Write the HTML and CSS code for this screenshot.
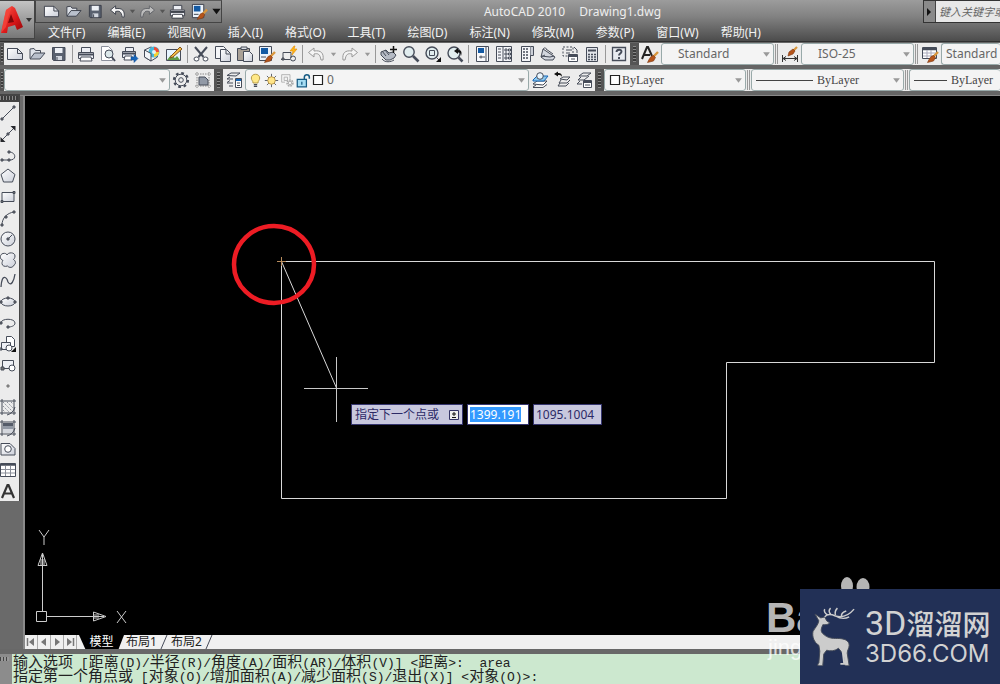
FILE: index.html
```html
<!DOCTYPE html>
<html lang="zh-CN">
<head>
<meta charset="utf-8">
<title>AutoCAD 2010 Drawing1.dwg</title>
<link rel="stylesheet" href="styles.css">
</head>
<body>
<svg class="sprite" aria-hidden="true">
  <defs>
    <linearGradient id="paper" x1="0" y1="0" x2="1" y2="1"><stop offset="0" stop-color="#fff"/><stop offset="1" stop-color="#ccd0da"/></linearGradient>
    <linearGradient id="red" x1="0" y1="0" x2="1" y2="1"><stop offset="0" stop-color="#ff5a4a"/><stop offset="0.6" stop-color="#d81517"/><stop offset="1" stop-color="#8c0608"/></linearGradient>
    <g id="brush"><path d="M17 7l-5 5" stroke="#d9963c" stroke-width="2.4"/><path d="M12.5 10.500l2 2-2 3.500-6 1.500 1.500-3 2-3z" fill="#b5541a" stroke="#7a3510" stroke-width=".6"/></g>
  </defs>
  <symbol id="new" viewBox="0 0 18 18"><path d="M1.500 3.500h10l5 5v6h-15z" fill="url(#paper)"/><path d="M11.500 3.500v5h5"/></symbol>
  <symbol id="open" viewBox="0 0 18 18"><path d="M2 13.500V4l4-.5 1.500 2h5v3" fill="#dfe3ea"/><path d="M2 14l4.500-6H17l-5 6z" fill="#b9c0cc"/></symbol>
  <symbol id="save" viewBox="0 0 18 18"><path d="M2.500 2.500h12.500v13H3.500l-1-1z" fill="#59616f"/><path d="M5 3h7.500v5H5z" fill="#edf0f5" stroke="none"/><path d="M6 11h6v4H6z" fill="#d3d8e0" stroke="none"/><path d="M7 12v3"/></symbol>
  <symbol id="print" viewBox="0 0 18 18"><path d="M4.500 7V2.500h9V7M1.500 7.500h15v6h-15z" fill="#eceef3"/><path d="M2 9.500h14" stroke-width="2"/><path d="M4 12h10l1 4H3z" fill="#fff"/></symbol>
  <symbol id="preview" viewBox="0 0 18 18"><path d="M2.500 1.500h7l4 4v10h-11z" fill="#fff" stroke="#8b909b"/><circle cx="10" cy="9" r="4" fill="#dce8ea"/><path d="M12.800 12l3.200 4" stroke-width="2"/></symbol>
  <symbol id="publish" viewBox="0 0 18 18"><path d="M4.500 6V2.500h8V6M1.500 6.500h13v6h-13z" fill="#eceef3"/><path d="M2 8.500h12" stroke-width="2"/><path d="M4 11h7v4H3z" fill="#fff"/><path d="M10 12h3v-2.500l4 4-4 4V15h-3z" fill="#1765b8" stroke="#0c4a91" stroke-width=".5"/></symbol>
  <symbol id="dwf" viewBox="0 0 18 18"><path d="M8 2l6.500 3v7L8 16l-6.500-4V5z" fill="#f2f5f8"/><circle cx="11" cy="7" r="5.500" fill="#48b7d8" stroke="none"/><path d="M11 7V2a5 5 0 0 1 5 5z" fill="#f04b34" stroke="none"/><path d="M11 7h5a5 5 0 0 1-5 5z" fill="#f5cf31" stroke="none"/><circle cx="11" cy="7" r="2" fill="#dff3f8" stroke="none"/><path d="M1.500 5L8 8.500V16l-6.500-4z" fill="#f2f5f8"/></symbol>
  <symbol id="markup" viewBox="0 0 18 18"><path d="M1.500 4.500h14v11h-14z" fill="#e7f5ff"/><path d="M2 15l4-5 4 3 2-2 3 4z" fill="#5f9b45" stroke="none"/><path d="M6 11l9-9 2 2-9 8-3 1z" fill="#f3bd49" stroke="#85551b"/></symbol>
  <symbol id="cut" viewBox="0 0 18 18"><path d="M3 2l8.500 10M15 2L6.500 12" stroke-width="2"/><ellipse cx="4.500" cy="14" rx="2.500" ry="2" fill="#fff"/><ellipse cx="13.500" cy="14" rx="2.500" ry="2" fill="#fff"/></symbol>
  <symbol id="copy" viewBox="0 0 18 18"><path d="M1.500 1.500h8l2 2v10h-10z" fill="#f5f6f8"/><path d="M6.500 4.500h6l4 4v8h-10z" fill="url(#paper)"/><path d="M12 5v4h4"/></symbol>
  <symbol id="paste" viewBox="0 0 18 18"><path d="M1.500 3.500h12v12h-12z" fill="#aaa196"/><path d="M5 4.500V2h6v2.500z" fill="#d9dce1"/><path d="M7.500 6.500h6l3 3v7h-9z" fill="url(#paper)"/></symbol>
  <symbol id="match" viewBox="0 0 18 18"><path d="M1.500 1.500h12v14h-12z" fill="#edf3fa"/><path d="M3 3h7v6H3z" fill="#145aa3" stroke="none"/><path d="M3 12h5"/><use href="#brush"/></symbol>
  <symbol id="block" viewBox="0 0 18 18"><path d="M3 13V7.500h8V13M1 14.500h9"/><circle cx="13" cy="13.500" r="2.500"/><path d="M2 13h2v2H2z" fill="#777"/><path d="M14 1l-4 5h3l-1 4 5-6h-3l1-3z" fill="#ffb619" stroke="#e38a00" stroke-width=".6"/></symbol>
  <symbol id="undo" viewBox="0 0 18 18"><path d="M7 3L1.500 7.500 7 12V9c4-1 6 0 7 6h2c1-7-2-10-9-9z" fill="#f5f5f5"/></symbol>
  <symbol id="redo" viewBox="0 0 18 18"><path d="M11 3l5.500 4.500L11 12V9c-4-1-6 0-7 6H2C1 8 4 5 11 6z" fill="#f5f5f5"/></symbol>
  <symbol id="caret" viewBox="0 0 8 8"><path d="M1 2h6L4 6z" fill="currentColor" stroke="none"/></symbol>
  <symbol id="pan" viewBox="0 0 18 18"><path d="M1 7l5-2 3 3 4-1 3 3-2 3-4 2H6l-5-5z" fill="#b5bac4"/><path d="M2 6l4 5M5 5l4 5M2 14c3 4 9 3 12 1"/><path d="M13.500 1v7M10 4.500h7" stroke="#111" stroke-width="1.500"/></symbol>
  <symbol id="zoom" viewBox="0 0 18 18"><circle cx="7" cy="7" r="5.200" fill="#e1edef" stroke-width="1.400"/><path d="M11 11l5.500 5.500" stroke-width="2.600"/></symbol>
  <symbol id="zoomw" viewBox="0 0 18 18"><circle cx="8" cy="8" r="6" fill="#e1edef" stroke-width="1.400"/><path d="M5.500 5.500h5v5h-5zM12.500 12.500l2.500 2.500"/><path d="M17 12v5h-5z" fill="#111" stroke="none"/></symbol>
  <symbol id="zoomp" viewBox="0 0 18 18"><circle cx="8" cy="8" r="6" fill="#e1edef" stroke-width="1.400"/><path d="M12.500 12.500l4 4" stroke-width="2.500"/><path d="M8 6l4-3v2c4 0 4 3 3 6-.5-3-1-3.500-3-3.500V9z" fill="#111" stroke="none"/></symbol>
  <symbol id="props" viewBox="0 0 18 18"><path d="M3.500 1.500h12v15h-12z" fill="#f8f9fc"/><path d="M5 3h6v5H5z" fill="#145aa3" stroke="none"/><path d="M13 2v14M6 12h6M8 10.500v3"/></symbol>
  <symbol id="center" viewBox="0 0 18 18"><path d="M1.500 1.500h15v15h-15z" fill="#f4f5f8"/><path d="M8 2v14M3 4h3M3 7h3M3 10h3M3 13h3M10 4h2v2h-2zM13.500 4h2v2h-2zM10 8h2v2h-2zM13.500 8h2v2h-2zM10 12h2v2h-2zM13.500 12h2v2h-2z"/></symbol>
  <symbol id="palette" viewBox="0 0 18 18"><path d="M4.500 1.500h9v15h-9z" fill="#f4f5f8"/><path d="M13.500 1.500h3v9h-3" fill="#ccd0d8"/><path d="M6 4h5M6 7h5M6 10h5M6 13h5" stroke-width="1.500" stroke-dasharray="2 1"/></symbol>
  <symbol id="sheet" viewBox="0 0 18 18"><path d="M4 4l12 8-2 3H6l-4-3z" fill="#d2d6de"/><path d="M4 4c2-2 3-1 3 0l7 5M2 11l9 1 4-1M2 12l4-2"/></symbol>
  <symbol id="dashed" viewBox="0 0 18 18"><path d="M2 2h10v9H2z" stroke-dasharray="2 1.500"/><path d="M5 5h6M5 8h4M13 2l3 3v3"/><path d="M7.500 9.500h9v7h-9z" fill="#fff"/><path d="M8 11h8" stroke-width="2"/><path d="M10 14h4"/></symbol>
  <symbol id="calc" viewBox="0 0 18 18"><path d="M3.500 2.500h11v14h-11z" fill="#e3e6eb"/><path d="M5 5.500h8" stroke-width="2"/><path d="M5 9.500h8M5 12h8M5 14.500h8" stroke-width="1.500" stroke-dasharray="2 1"/></symbol>
  <symbol id="help" viewBox="0 0 18 18"><path d="M2.500 2.500h13v13h-13z" fill="#e8ebf0" stroke-width="1.300"/><path d="M6.500 7c0-3 5-3 5-.5 0 2-2.500 2-2.500 4M9 12v2" stroke-width="1.900"/></symbol>
  <symbol id="textstyle" viewBox="0 0 18 18"><path d="M1 14L6 2h1l4 9M3 10h6" stroke="#222" stroke-width="2"/><use href="#brush"/></symbol>
  <symbol id="dimstyle" viewBox="0 0 18 18"><path d="M1.500 10v7M16.500 10v7M2 13.500h14M5 11.500l-3 2 3 2M13 11.500l3 2-3 2" stroke="#333"/><path d="M16 2l-4 4" stroke="#d9963c" stroke-width="2.200"/><path d="M12 4l2 2-2 3-5 2 1-4z" fill="#b5541a" stroke="#7a3510" stroke-width=".6"/></symbol>
  <symbol id="tablestyle" viewBox="0 0 18 18"><path d="M1.500 2.500h14v11h-14z" fill="#fff"/><path d="M2 4h13" stroke-width="2.500"/><path d="M2 8h13M2 11h13M6 5v8M10 5v8" stroke="#aab"/><use href="#brush"/></symbol>
  <symbol id="gear" viewBox="0 0 18 18"><circle cx="9" cy="9" r="7" stroke-width="2.200" stroke-dasharray="2.750 2.750"/><circle cx="9" cy="9" r="5.800" fill="#eee"/><circle cx="9" cy="9" r="2.300"/></symbol>
  <symbol id="workspace" viewBox="0 0 18 18"><path d="M3 1v16M15 1v16M1 3h16M1 15h16" stroke="#888" stroke-dasharray="1.500 1"/><path d="M5 6h6l3 3v5H5z" fill="#9199a6"/></symbol>
  <symbol id="layerprop" viewBox="0 0 18 18"><path d="M2 4.500L6 2h9l-4 3zM2 8l3-2M2 8h6M2 11.500l3-2M2 12h6M4 15h4"/><path d="M10.500 7.500h6v9h-6z" fill="#fff"/><path d="M11 9h5" stroke="#1766b6" stroke-width="2"/><path d="M12 12h3M12 14.500h3"/></symbol>
  <symbol id="bulb" viewBox="0 0 18 18"><path d="M6 12c0-3-2-3-2-6 0-6 10-6 10 0 0 3-2 3-2 6z" fill="#ffe887" stroke="#a88c38"/><path d="M7 14h4M7 16h4" stroke-width="1.500"/></symbol>
  <symbol id="sun" viewBox="0 0 18 18"><path d="M9 1v16M1 9h16M3.500 3.500l11 11M14.500 3.500l-11 11"/><circle cx="9" cy="9" r="4.500" fill="#ffe58a" stroke="#b48b38"/></symbol>
  <symbol id="vpfreeze" viewBox="0 0 18 18"><g stroke="#aaa"><path d="M2 2h10v5M2 2v9h4M5 5h4v4H5z"/><circle cx="12" cy="12" r="3.500" stroke-width="2" stroke-dasharray="2 1"/><circle cx="12" cy="12" r="2"/></g></symbol>
  <symbol id="lock" viewBox="0 0 18 18"><path d="M10 8V5c0-4 6-4 6 0v2" stroke="#175b83" stroke-width="1.800"/><path d="M1.500 7.500h11v9h-11z" fill="#a6ddf3" stroke="#175b83" stroke-width="1.500"/><path d="M7 10.500v3.500" stroke="#175b83" stroke-width="1.500"/></symbol>
  <symbol id="swatch" viewBox="0 0 12 12"><path d="M1.500 1.500h9v9h-9z" fill="#fff" stroke="#222" stroke-width="1.200"/></symbol>
  <symbol id="layercur" viewBox="0 0 18 18"><path d="M2 13l4-3h10l-4 4zM2 16l3-2M2 16.500h10l4-3" fill="#fff"/><path d="M2 9l4-4h11l-4 5H2z" fill="#8ec8ed" stroke="#1766b6"/><circle cx="9" cy="5" r="3.300" fill="#e8f6ff"/></symbol>
  <symbol id="layerprev" viewBox="0 0 18 18"><path d="M7 8l3-2h7l-3 3zM6 12h8l3-3M5 15h8l3-3M8 9l-2 3M7 12l-2 3"/><path d="M1 3l4-2.500V2c3 0 4 1 4 4-1-2-2-2-4-2v1.500z" fill="#111" stroke="none"/></symbol>
  <symbol id="layerstate" viewBox="0 0 18 18"><path d="M4 5l4-3h8l-4 3zM3 9l3-3M3 9h6l5-4M2 13l3-3M2 13h5"/><path d="M8.500 9.500h8v7h-8z" fill="#fff"/><path d="M9 11h7" stroke-width="2"/><path d="M10 14h5"/></symbol>

  <symbol id="line" viewBox="0 0 18 18"><path d="M3 15L15 3"/><path d="M2 14h2v2H2zM14 2h2v2h-2z" fill="#777"/></symbol>
  <symbol id="xline" viewBox="0 0 18 18"><path d="M3 15L15 3"/><path d="M1.500 17v-5l5 5zM16.500 1v5l-5-5z" fill="#26282d" stroke="none"/><path d="M8 8h2v2H8z" fill="#777"/></symbol>
  <symbol id="pline" viewBox="0 0 18 18"><path d="M3 14h8c7 0 6-8-1-8"/><path d="M2 13h2v2H2zM9 13h2v2H9zM9 5h2v2H9z" fill="#777"/></symbol>
  <symbol id="polygon" viewBox="0 0 18 18"><path d="M9 2l7 5.500L13.500 15h-9L2 7.500z" fill="url(#paper)"/></symbol>
  <symbol id="rect" viewBox="0 0 18 18"><path d="M3 4.500h12v9H3z" fill="url(#paper)"/><path d="M2 12.500h2v2H2zM14 3.500h2v2h-2z" fill="#777"/></symbol>
  <symbol id="arc" viewBox="0 0 18 18"><path d="M3 16C3 9 8 4 15 3"/><path d="M2 15h2v2H2zM6 7h2v2H6zM14 2h2v2h-2z" fill="#777"/></symbol>
  <symbol id="circle" viewBox="0 0 18 18"><circle cx="9" cy="9" r="7" fill="url(#paper)"/><path d="M9 9l4-4"/><path d="M8 8h2v2H8z" fill="#777"/></symbol>
  <symbol id="cloud" viewBox="0 0 18 18"><path d="M8 4c1-3 8-3 8 1 0 2-1 3-1.500 3.500C17 10 17 13 15 14c-1 3-5 3-6.500 1C6 16 3 15 3 12.500 3 11 3.500 10 4 9.500 0 8 1 3 4 2.500c2-.5 3.500 0 4 1.500z" fill="url(#paper)"/></symbol>
  <symbol id="spline" viewBox="0 0 18 18"><path d="M2 15C3 0 8 6 9 10c3 5 6-1 7-8" stroke-width="1.300"/></symbol>
  <symbol id="ellipse" viewBox="0 0 18 18"><ellipse cx="9" cy="9" rx="7" ry="4" fill="url(#paper)"/><path d="M8 4h2v2H8zM1 8h2v2H1zM15 8h2v2h-2z" fill="#777"/></symbol>
  <symbol id="earc" viewBox="0 0 18 18"><path d="M2 9c0-5 14-5 14 0 0 3-4 4-7 4"/><path d="M1 8h2v2H1zM8 12h2v2H8z" fill="#777"/></symbol>
  <symbol id="insert" viewBox="0 0 18 18"><path d="M7.500 1.500h5l3 3v7h-8z" fill="#fff"/><path d="M2.500 7.500h9v7h-9z" fill="#eef0f5"/><circle cx="10" cy="13" r="3" fill="#fff"/><path d="M1 13h2v2H1z"/><path d="M17 12v5h-5z" fill="#111" stroke="none"/></symbol>
  <symbol id="mkblock" viewBox="0 0 18 18"><path d="M3.500 4.500h11v8h-11z" fill="#eef0f5"/><path d="M2 11h3v3H2z" fill="#777"/><circle cx="13" cy="12" r="3" fill="#fff"/></symbol>
  <symbol id="point" viewBox="0 0 18 18"><path d="M8 8h2v2H8z" fill="#999" stroke="#777"/></symbol>
  <symbol id="hatch" viewBox="0 0 18 18"><path d="M3 1v16M15 1v16M1 3h16M1 15h16"/><path d="M4 4l10 10M4 8l6 6M8 4l6 6M4 12l2 2M12 4l2 2" stroke="#8a8e98" stroke-dasharray="1.500 1"/><path d="M8 17c4-1 7-4 8-8"/></symbol>
  <symbol id="gradient" viewBox="0 0 18 18"><path d="M4 4h10v3H4z" fill="#555c69" stroke="none"/><path d="M4 7h10v3H4z" fill="#9299a5" stroke="none"/><path d="M4 10h10v4H4z" fill="#d4d7dd" stroke="none"/><path d="M3 1v16M15 1v16M1 3h16M1 15h16M8 17c4-1 7-4 8-8"/></symbol>
  <symbol id="region" viewBox="0 0 18 18"><path d="M2 3.500h9l5 5V15H2z" fill="url(#paper)"/><circle cx="9" cy="9" r="3.300" fill="#fff"/></symbol>
  <symbol id="table" viewBox="0 0 18 18"><path d="M1.500 2.500h15v13h-15z" fill="#fff"/><path d="M2 3.500h14" stroke-width="2.500"/><path d="M2 8.500h14M2 12h14M6.500 5v10M11.500 5v10" stroke="#8a8e98"/></symbol>
  <symbol id="mtext" viewBox="0 0 18 18"><path d="M3 16L8.500 3h1L15 16M5.500 11.500h7" stroke="#333" stroke-width="2.200"/></symbol>
</svg>

<header class="titlebar">
  <button class="appbtn" aria-label="应用程序菜单">
    <svg class="applogo" viewBox="0 0 22 30"><path d="M0 28L5 5l6-4 3 2 8 19-6 3-2-5-7 2-1 6z" fill="url(#red)"/><path d="M10 9l-3 9 6-1z" fill="#7d0709"/><path d="M5 5l6-4-4 12-2 9-5 6z" fill="#f8473d" opacity=".7"/></svg>
    <svg class="caret"><use href="#caret"/></svg>
  </button>
  <div class="headmain">
    <div class="toprow">
      <div class="quick">
        <button aria-label="新建"><svg><use href="#new"/></svg></button>
        <button aria-label="打开"><svg><use href="#open"/></svg></button>
        <button aria-label="保存"><svg><use href="#save"/></svg></button>
        <button aria-label="放弃"><svg><use href="#undo"/></svg></button>
        <button aria-label="放弃列表" class="narrow"><svg><use href="#caret"/></svg></button>
        <button aria-label="重做" class="faded"><svg><use href="#redo"/></svg></button>
        <button aria-label="重做列表" class="narrow"><svg><use href="#caret"/></svg></button>
        <button aria-label="打印"><svg><use href="#print"/></svg></button>
        <button aria-label="特性匹配"><svg><use href="#match"/></svg></button>
        <button aria-label="自定义" class="narrow more"><svg><use href="#caret"/></svg></button>
      </div>
      <h1 class="title"><span>AutoCAD 2010</span><span>Drawing1.dwg</span></h1>
      <div class="search">
        <button aria-label="展开"><svg viewBox="0 0 6 8"><path d="M1 0l4 4-4 4z" fill="#111" stroke="none"/></svg></button>
        <input type="text" aria-label="搜索" placeholder="键入关键字或短语">
      </div>
    </div>
    <nav class="menu">
      <button>文件(F)</button><button>编辑(E)</button><button>视图(V)</button><button>插入(I)</button><button>格式(O)</button><button>工具(T)</button><button>绘图(D)</button><button>标注(N)</button><button>修改(M)</button><button>参数(P)</button><button>窗口(W)</button><button>帮助(H)</button>
    </nav>
  </div>
</header>

<div class="bars">
  <div class="barrow">
    <i class="grip edge"></i>
    <div class="bar">
      <button aria-label="新建"><svg><use href="#new"/></svg></button>
      <button aria-label="打开"><svg><use href="#open"/></svg></button>
      <button aria-label="保存"><svg><use href="#save"/></svg></button>
      <i class="sep"></i>
      <button aria-label="打印"><svg><use href="#print"/></svg></button>
      <button aria-label="打印预览"><svg><use href="#preview"/></svg></button>
      <button aria-label="发布"><svg><use href="#publish"/></svg></button>
      <button aria-label="三维DWF"><svg><use href="#dwf"/></svg></button>
      <button aria-label="标记"><svg><use href="#markup"/></svg></button>
      <i class="sep"></i>
      <button aria-label="剪切"><svg><use href="#cut"/></svg></button>
      <button aria-label="复制"><svg><use href="#copy"/></svg></button>
      <button aria-label="粘贴"><svg><use href="#paste"/></svg></button>
      <button aria-label="特性匹配"><svg><use href="#match"/></svg></button>
      <button aria-label="块编辑器"><svg><use href="#block"/></svg></button>
      <i class="sep"></i>
      <button aria-label="放弃" class="faded"><svg><use href="#undo"/></svg></button>
      <button aria-label="放弃列表" class="narrow"><svg><use href="#caret"/></svg></button>
      <button aria-label="重做" class="faded"><svg><use href="#redo"/></svg></button>
      <button aria-label="重做列表" class="narrow"><svg><use href="#caret"/></svg></button>
      <i class="sep"></i>
      <button aria-label="平移"><svg><use href="#pan"/></svg></button>
      <button aria-label="缩放"><svg><use href="#zoom"/></svg></button>
      <button aria-label="窗口缩放"><svg><use href="#zoomw"/></svg></button>
      <button aria-label="上一缩放"><svg><use href="#zoomp"/></svg></button>
      <i class="sep"></i>
      <button aria-label="特性"><svg><use href="#props"/></svg></button>
      <button aria-label="设计中心"><svg><use href="#center"/></svg></button>
      <button aria-label="工具选项板"><svg><use href="#palette"/></svg></button>
      <button aria-label="图纸集"><svg><use href="#sheet"/></svg></button>
      <button aria-label="标记集"><svg><use href="#dashed"/></svg></button>
      <button aria-label="计算器"><svg><use href="#calc"/></svg></button>
      <i class="sep"></i>
      <button aria-label="帮助"><svg><use href="#help"/></svg></button>
    </div>
    <i class="grip"></i>
    <div class="bar rest">
      <button aria-label="文字样式"><svg><use href="#textstyle"/></svg></button>
      <div class="combo style"><select aria-label="文字样式列表"><option>Standard</option></select><svg class="arrow"><use href="#caret"/></svg></div>
      <i class="dbl"></i>
      <button aria-label="标注样式"><svg><use href="#dimstyle"/></svg></button>
      <div class="combo style"><select aria-label="标注样式列表"><option>ISO-25</option></select><svg class="arrow"><use href="#caret"/></svg></div>
      <i class="dbl"></i>
      <button aria-label="表格样式"><svg><use href="#tablestyle"/></svg></button>
      <div class="combo tail"><select aria-label="表格样式列表"><option>Standard</option></select></div>
    </div>
  </div>
  <div class="barrow">
    <i class="grip edge"></i>
    <div class="bar">
      <div class="combo ws"><select aria-label="工作空间"><option></option></select><svg class="arrow"><use href="#caret"/></svg></div>
      <button aria-label="工作空间设置"><svg><use href="#gear"/></svg></button>
      <button aria-label="我的工作空间"><svg><use href="#workspace"/></svg></button>
    </div>
    <i class="grip"></i>
    <div class="bar">
      <button aria-label="图层特性"><svg><use href="#layerprop"/></svg></button>
      <div class="combo layer">
        <svg class="mini"><use href="#bulb"/></svg><svg class="mini"><use href="#sun"/></svg><svg class="mini"><use href="#vpfreeze"/></svg><svg class="mini"><use href="#lock"/></svg><svg class="sw"><use href="#swatch"/></svg>
        <select aria-label="图层"><option>0</option></select><svg class="arrow"><use href="#caret"/></svg>
      </div>
      <button aria-label="置为当前图层"><svg><use href="#layercur"/></svg></button>
      <button aria-label="上一图层"><svg><use href="#layerprev"/></svg></button>
      <button aria-label="图层状态"><svg><use href="#layerstate"/></svg></button>
    </div>
    <i class="grip"></i>
    <div class="bar rest">
      <div class="combo color"><svg class="sw"><use href="#swatch"/></svg><select aria-label="颜色"><option>ByLayer</option></select><svg class="arrow"><use href="#caret"/></svg></div>
      <i class="dbl"></i>
      <div class="combo ltype"><i class="rule"></i><select aria-label="线型"><option>ByLayer</option></select><svg class="arrow"><use href="#caret"/></svg></div>
      <i class="dbl"></i>
      <div class="combo tail weight"><i class="rule"></i><select aria-label="线宽"><option>ByLayer</option></select></div>
    </div>
  </div>
</div>

<main class="work">
  <aside class="draw">
    <i class="drawgrip"></i>
    <div class="tools">
      <button aria-label="直线"><svg><use href="#line"/></svg></button>
      <button aria-label="构造线"><svg><use href="#xline"/></svg></button>
      <button aria-label="多段线"><svg><use href="#pline"/></svg></button>
      <button aria-label="正多边形"><svg><use href="#polygon"/></svg></button>
      <button aria-label="矩形"><svg><use href="#rect"/></svg></button>
      <button aria-label="圆弧"><svg><use href="#arc"/></svg></button>
      <button aria-label="圆"><svg><use href="#circle"/></svg></button>
      <button aria-label="修订云线"><svg><use href="#cloud"/></svg></button>
      <button aria-label="样条曲线"><svg><use href="#spline"/></svg></button>
      <button aria-label="椭圆"><svg><use href="#ellipse"/></svg></button>
      <button aria-label="椭圆弧"><svg><use href="#earc"/></svg></button>
      <button aria-label="插入块"><svg><use href="#insert"/></svg></button>
      <button aria-label="创建块"><svg><use href="#mkblock"/></svg></button>
      <button aria-label="点"><svg><use href="#point"/></svg></button>
      <button aria-label="图案填充"><svg><use href="#hatch"/></svg></button>
      <button aria-label="渐变色"><svg><use href="#gradient"/></svg></button>
      <button aria-label="面域"><svg><use href="#region"/></svg></button>
      <button aria-label="表格"><svg><use href="#table"/></svg></button>
      <button aria-label="多行文字"><svg><use href="#mtext"/></svg></button>
    </div>
  </aside>
  <section class="view">
    <div class="canvas">
      <svg class="geometry" width="975" height="538" viewBox="0 0 975 538">
        <path d="M256.500 165.500h653v101h-208v136h-445z" stroke="#d8d8d8"/>
        <path d="M256.500 165.500L311.500 292" stroke="#d8d8d8"/>
        <path d="M311.500 261v65M279 292.500h64" stroke="#c8c8c8"/>
        <path d="M256.500 161v9M252 165.500h9" stroke="#b98d5e"/>
        <ellipse cx="249" cy="168.500" rx="40" ry="38.500" stroke="#ed1c24" stroke-width="4.500"/>
      </svg>
      <div class="dynamic">
        <label class="prompt" for="dx"><span>指定下一个点或</span><svg viewBox="0 0 10 10"><path d="M.5.5h9v9h-9z" fill="#eee" stroke="#336"/><path d="M5 2v4M3 4h4M3 7.500h4" stroke="#111"/></svg></label>
        <input id="dx" class="sel" type="text" value="1399.191">
        <input id="dy" class="coord" type="text" value="1095.1004" aria-label="第二坐标">
      </div>
      <svg class="ucs" width="96" height="96" viewBox="0 0 96 96">
        <path d="M4.500 79.500h10v10h-10zM10.500 79V24M15 84.500h47"/>
        <path d="M10.500 21L6 33.500h9zM10.500 22v11M9 27v6M12 27v6M74 84.500L61.500 80v9zM72 84.500H62M67 83h-5M67 86h-5"/>
        <path d="M7 -2l5 7 5-7M12 5v8M85 79l9 12M94 79l-9 12"/>
      </svg>
    </div>
    <div class="tabs">
      <button class="nav" aria-label="第一个"><svg viewBox="0 0 12 12"><path d="M2.500 2v8" stroke="#777" stroke-width="1.500"/><path d="M9 2v8L4 6z"/></svg></button>
      <button class="nav" aria-label="上一个"><svg viewBox="0 0 12 12"><path d="M8 2v8L3 6z"/></svg></button>
      <button class="nav" aria-label="下一个"><svg viewBox="0 0 12 12"><path d="M4 2v8l5-4z"/></svg></button>
      <button class="nav" aria-label="最后一个"><svg viewBox="0 0 12 12"><path d="M9.500 2v8" stroke="#777" stroke-width="1.500"/><path d="M3 2v8l5-4z"/></svg></button>
      <button class="tab active">模型</button>
      <button class="tab">布局1</button>
      <svg class="slash" viewBox="0 0 8 14"><path d="M7 0L1 14"/></svg>
      <button class="tab">布局2</button>
      <svg class="slash" viewBox="0 0 8 14"><path d="M7 0L1 14"/></svg>
    </div>
  </section>
</main>

<footer class="command">
  <i class="cmdgrip"></i>
  <div class="lines">
    <div class="cmdline"><span>输入选项<b> [</b>距离<b>(D)/</b>半径<b>(R)/</b>角度<b>(A)/</b>面积<b>(AR)/</b>体积<b>(V)] &lt;</b>距离<b>&gt;:  area</b></span></div>
    <div class="cmdline"><label for="cmd">指定第一个角点或<b> [</b>对象<b>(O)/</b>增加面积<b>(A)/</b>减少面积<b>(S)/</b>退出<b>(X)] &lt;</b>对象<b>(O)&gt;:</b></label><input id="cmd" type="text"></div>
  </div>
</footer>

<div class="baidu" aria-hidden="true">
  <svg viewBox="0 0 32 16"><ellipse cx="8" cy="9" rx="6" ry="9"/><ellipse cx="24" cy="10" rx="6.500" ry="9"/></svg>
  <strong>Ba</strong><span>jing</span>
</div>
<div class="brand">
  <svg class="deer" viewBox="0 0 46 60">
    <path d="M3 7l6 4 4-1 2 4 3 2c-1 2-4 2-7 2-1 3-3 6 0 9 5 5 10 5 15 5 7 0 12 2 12 7 0 3-2 5-2 8l2 13h-4l-1-2-1-10-5-6c-4 3-8 3-12 2l-3 4-1 12H6v-2l1-1 1-12-1-6C2 36 0 30 1 25c2-4 5-6 6-11z" fill="#ccc"/>
    <path d="M31 42l2 16h-4" stroke="#ccc" stroke-width="2"/>
    <path d="M13 10c2-3 6-3 11-1 7 2 14-1 19-7M16 8c-3-2-4-4-3-6M19 7c-2-2-2-4 0-6M24 8c-1-3 0-5 2-7M30 9c0-3 2-4 5-5M24 9c5 3 10 3 14 1" stroke="#ccc" stroke-width="1.500"/>
  </svg>
  <div class="words"><div class="cn"><b>3D</b>溜溜网</div><div class="com">3D66.COM</div></div>
</div>
</body>
</html>
```

FILE: styles.css
```css
* { box-sizing: border-box; }
body {
  margin: 0;
  height: 100vh;
  display: flex;
  flex-direction: column;
  overflow: hidden;
  position: relative;
  background: #6a6a6a;
  font: 12px/16px "Noto Sans", "Noto Sans CJK SC", sans-serif;
}
button, input, select { font: inherit; color: inherit; border: 0; padding: 0; margin: 0; background: none; border-radius: 0; outline: 0; }
button { flex: none; display: flex; align-items: center; justify-content: center; }
svg { fill: none; stroke: #464c59; flex: none; }
.sprite { position: absolute; width: 0; height: 0; }

/* title bar */
.titlebar { display: flex; height: 42px; flex: none; background: linear-gradient(#9c9c9c, #828282 40%, #4c4c4c); border-bottom: 1px solid #303030; }
.appbtn { width: 35px; height: 39px; gap: 2px; background: linear-gradient(#c4c4c4, #777); border: 1px solid #444; border-left: 0; }
.applogo { width: 22px; height: 30px; stroke: none; }
.appbtn .caret { width: 8px; height: 8px; color: #333; }
.headmain { flex: 1; min-width: 0; display: flex; flex-direction: column; }
.toprow { display: flex; height: 23px; justify-content: space-between; }
.quick { display: flex; align-items: center; width: 187px; padding-left: 4px; background: linear-gradient(#969696, #777); border: 1px solid #444; border-top-color: #5a5a5a; }
.quick button { width: 22px; height: 20px; }
.quick svg { width: 17px; height: 17px; stroke: #3a3f49; }
.quick .narrow { width: 8px; color: #555; }
.quick .narrow svg { width: 7px; height: 7px; }
.quick .more { width: 12px; color: #111; }
.quick .more svg { width: 11px; height: 11px; }
.quick .faded { opacity: .5; }
.title { margin: 0; display: flex; gap: 14px; font-size: 12px; font-weight: 400; line-height: 23px; color: #eee; }
.search { display: flex; width: 77px; overflow: hidden; background: #e8e8e8; border: 1px solid #333; border-right: 0; }
.search button { width: 12px; background: #8a8a8a; border-right: 1px solid #444; }
.search svg { width: 6px; height: 8px; }
.search input { width: 64px; padding-left: 3px; font-size: 11px; font-style: italic; }
.search input::placeholder { color: #666; opacity: 1; }
.menu { display: flex; gap: 22px; padding: 2px 0 0 13px; color: #f2f2f2; }
.menu button { line-height: 16px; white-space: nowrap; }

/* toolbars */
.bars { display: flex; flex-direction: column; gap: 4px; flex: none; padding: 1px 0 4px; background: #656565; border-bottom: 1px solid #888; }
.barrow { display: flex; height: 22px; overflow: hidden; }
.bar { display: flex; align-items: center; flex: none; height: 22px; background: #ececec; }
.bar.rest { flex: 1; min-width: 0; }
.bar button { width: 22px; height: 22px; }
.bar button svg { width: 18px; height: 18px; }
.bar .narrow { width: 12px; color: #999; }
.bar .narrow svg { width: 7px; height: 7px; }
.bar .faded svg { stroke: #999; }
.sep { flex: none; width: 1px; height: 18px; margin: 0 2px; background: #999; }
.grip { flex: none; width: 9px; border: 3px solid #555; background: repeating-linear-gradient(#888 0 1px, #3c3c3c 1px 3px); }
.grip.edge { width: 4px; border-width: 3px 1px; }
.dbl { flex: none; width: 3px; height: 20px; margin: 0 1px; border: 1px solid #999; border-width: 0 1px; }
.combo { display: flex; align-items: center; flex: none; height: 22px; background: #f4f4f4; border: 1px solid #9aa; border-radius: 3px; color: #666; }
.combo select { flex: 1; min-width: 0; height: 20px; appearance: none; }
.combo .arrow { width: 9px; height: 9px; margin: 0 2px; color: #999; }
.combo .mini { width: 15px; height: 15px; margin-right: 1px; }
.combo .sw { width: 12px; height: 12px; }
.style { width: 113px; padding-left: 16px; }
.tail { flex: 1; min-width: 0; padding-left: 4px; border-right: 0; }
.ws { width: 166px; }
.layer { width: 284px; padding-left: 2px; }
.layer select { padding-left: 3px; }
.color { width: 142px; padding-left: 4px; }
.color, .ltype, .weight { font-family: "Liberation Serif", serif; color: #444; }
.color select { padding-left: 1px; }
.ltype { width: 153px; padding-left: 4px; }
.rule { flex: none; width: 57px; height: 1px; margin-right: 4px; background: #444; }
.weight .rule { width: 33px; }

/* workspace */
.work { flex: 1; min-height: 0; display: flex; }
.draw { flex: none; width: 25px; border-right: 2px solid #8a8a8a; }
.drawgrip { display: block; width: 20px; height: 8px; margin-top: -2px; border: 2px solid #444; border-left: 0; background: repeating-linear-gradient(90deg, #888 0 1px, #3c3c3c 1px 3px); }
.tools { display: flex; flex-direction: column; width: 20px; background: #ececec; border-right: 1px solid #444; }
.tools button { width: 15px; height: 21px; }
.tools svg { width: 18px; height: 18px; }
.view { flex: 1; min-width: 0; display: flex; flex-direction: column; }
.canvas { flex: 1; position: relative; overflow: hidden; background: #000; }
.geometry { position: absolute; left: 0; top: 0; }
.dynamic { position: absolute; left: 326px; top: 308px; display: flex; gap: 4px; color: #2c2a66; line-height: 17px; }
.prompt { display: flex; align-items: center; justify-content: space-between; width: 112px; height: 21px; padding: 0 3px; background: #c8c8de; border: 1px solid #35356e; }
.prompt svg { width: 10px; height: 10px; }
.dynamic input { height: 21px; padding: 1px 2px; border: 1px solid #35356e; }
.sel { width: 62px; background: linear-gradient(#39f, #39f) 2px 2px / 51px 15px no-repeat, #fff; color: #fff; }
.coord { width: 69px; background: #c8c8de; }
.ucs { position: absolute; left: 7px; bottom: 7px; stroke: #ccc; overflow: visible; }
.tabs { display: flex; flex: none; height: 14px; background: #f0f0f0; color: #222; }
.nav { width: 13px; border-right: 1px solid #aaa; }
.nav svg { width: 12px; height: 12px; fill: #777; stroke: none; }
.tab { padding: 0 2px; line-height: 14px; }
.tab.active { width: 45px; margin-left: 2px; background: #000; color: #fff; clip-path: polygon(0 0, 100% 0, 88% 100%, 14% 100%); }
.slash { width: 8px; height: 14px; margin: 0 1px; }

/* command line */
.command { flex: none; display: flex; border-top: 5px solid #686868; background: #8c8c8c; }
.cmdgrip { width: 9px; height: 4px; margin: 3px 3px 0 0; background: repeating-linear-gradient(90deg, #444 0 1px, #999 1px 3px); }
.lines { flex: 1; min-width: 0; padding: 0 0 2px 1px; background: #cce8cf; }
.cmdline { display: flex; height: 14px; white-space: pre; font: 15px/14px "Noto Sans CJK SC", sans-serif; color: #222; }
.cmdline b { font: 13px/1px "Liberation Mono", monospace; }
.cmdline input { flex: 1; min-width: 0; height: 14px; }

/* overlays */
.baidu { position: absolute; right: 100px; bottom: 20px; width: 134px; height: 88px; color: #b5b5b5; }
.baidu svg { position: absolute; left: 73px; top: 1px; width: 32px; height: 16px; fill: #b5b5b5; stroke: none; }
.baidu strong { position: absolute; left: 0; top: 21px; font: bold 42px/42px "Liberation Sans", sans-serif; }
.baidu span { position: absolute; left: 2px; top: 60px; font: 22px/24px "Liberation Sans", sans-serif; color: #fff; opacity: .75; }
.brand { position: absolute; right: 0; bottom: 0; display: flex; gap: 8px; align-items: center; width: 200px; height: 95px; padding-left: 12px; background: #223056; color: #d2d2d2; }
.deer { width: 45px; height: 59px; }
.words { display: flex; flex-direction: column; white-space: nowrap; }
.cn { display: flex; align-items: center; height: 34px; font: 500 28px/34px "Noto Sans CJK SC", sans-serif; }
.cn b { font: 34px/34px Roboto, sans-serif; }
.com { font: 24px/28px Inter, sans-serif; }
```
